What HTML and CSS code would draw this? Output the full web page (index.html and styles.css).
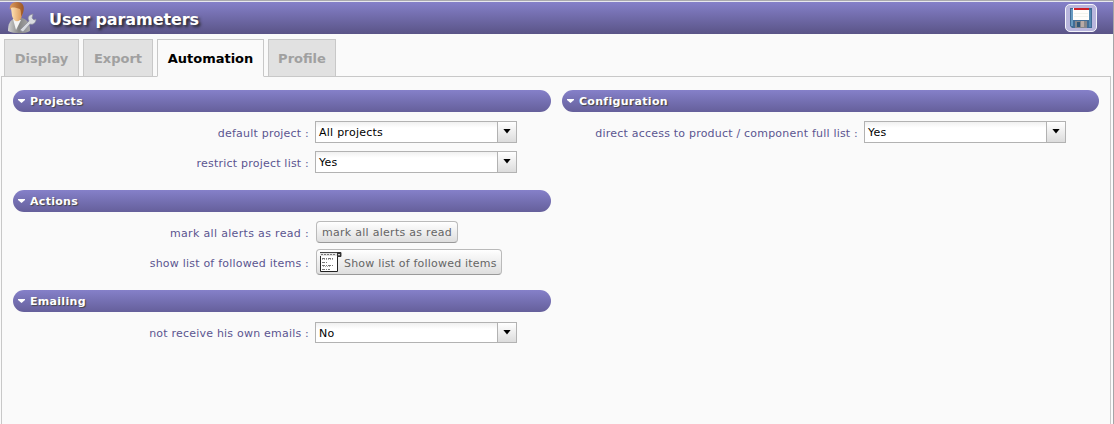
FILE: index.html
```html
<!DOCTYPE html>
<html lang="en">
<head>
<meta charset="utf-8">
<title>User parameters</title>
<link rel="stylesheet" href="styles.css">
</head>
<body>
<div class="window">
  <header class="titlebar">
    <svg class="user-icon" width="30" height="32" viewBox="0 0 30 32">
      <defs>
        <linearGradient id="skin" x2="1"><stop stop-color="#ffe2b4"/><stop offset="1" stop-color="#d99251"/></linearGradient>
        <linearGradient id="suit" x2="1"><stop stop-color="#d2d2d2"/><stop offset=".5" stop-color="#858585"/><stop offset="1" stop-color="#a9a9a9"/></linearGradient>
        <linearGradient id="hair" x2="1"><stop stop-color="#dc9a5c"/><stop offset="1" stop-color="#9c5522"/></linearGradient>
      </defs>
      <path d="M0 29c0-7 2-11 7-13h7c6 2 8 5 8 13-5 3-16 3-22 0z" fill="url(#suit)"/>
      <path d="M5 17l3 11 5-10z" fill="#f4f4f4"/>
      <path d="M3 6c0-5 11-5 12 0l-1 8c-2 7-8 7-10 0z" fill="url(#skin)"/>
      <path d="M2 8c-1-5 2-8 7-8 6 0 8 4 6 11l-2 4c0-4 0-6-1-8-3-1-7-2-9-1z" fill="url(#hair)"/>
      <path d="M12 28l9-9c-2-4 0-6 4-7l-1 4 2 2 2-1c0 4-3 6-6 5L15 30z" fill="#d9dbe0" stroke="#8b8c9b" stroke-width=".7"/>
    </svg>
    <h1 class="title">User parameters</h1>
    <button class="save" aria-label="Save">
      <svg width="22" height="20" viewBox="0 0 22 20">
        <path d="M0 0h22v20H2l-2-2z" fill="#416c96"/>
        <path d="M1 1h2v17H1z" fill="#689bc1"/>
        <path d="M19 2h2v17h-2z" fill="#558ab2"/>
        <path d="M3 0h16v12H3z" fill="#fffefb"/>
        <path d="M4 0h15v2H4z" fill="#cd2028"/>
        <path d="M4 5.500h14M4 8.500h14" stroke="#f0f3ec"/>
        <path d="M5 13h12v7H5z" fill="#85868c"/>
        <path d="M7 14h3v5H7z" fill="#2f5677"/>
        <path d="M11 13h3v6h-3z" fill="#b9aaa5"/>
      </svg>
    </button>
  </header>
  <nav class="tabs">
    <span class="tab tab-display">Display</span>
    <span class="tab tab-export">Export</span>
    <span class="tab tab-automation active">Automation</span>
    <span class="tab tab-profile">Profile</span>
  </nav>
  <main class="panel">
    <div class="column">
      <section class="group">
        <h2 class="bar"><i class="caret"></i>Projects</h2>
        <div class="row"><label>default project :</label><div class="select"><span>All projects</span><i class="drop"></i></div></div>
        <div class="row"><label>restrict project list :</label><div class="select"><span>Yes</span><i class="drop"></i></div></div>
      </section>
      <section class="group">
        <h2 class="bar"><i class="caret"></i>Actions</h2>
        <div class="row"><label class="wide">mark all alerts as read :</label><button class="button mark">mark all alerts as read</button></div>
        <div class="row"><label>show list of followed items :</label><button class="button show">
          <svg width="23" height="21" viewBox="0 0 23 21">
            <path d="M1.500 1h17v18.500h-17z" fill="#fff" stroke="#222"/>
            <path d="M1 1h17v3H1z" fill="#e2e2e2"/>
            <path d="M2 2.500h14" stroke="#777" stroke-dasharray="2 1"/>
            <path d="M1 .5h21v4h-4" stroke="#444" fill="none"/>
            <path d="M18 0h4v5h-4z" fill="#333"/><path d="M19 2h2l-1 2z" fill="#fff"/>
            <path d="M3 6.500h11M3 10.500h6M3 13.500h11M3 17.500h8" stroke="#777" stroke-dasharray="3 1 1 1"/>
            <path d="M3 7.500h12M4 14.500h7" stroke="#aaa" stroke-dasharray="1 1"/>
          </svg><span>Show list of followed items</span></button></div>
      </section>
      <section class="group">
        <h2 class="bar"><i class="caret"></i>Emailing</h2>
        <div class="row"><label>not receive his own emails :</label><div class="select short"><span>No</span><i class="drop"></i></div></div>
      </section>
    </div>
    <div class="column">
      <section class="group">
        <h2 class="bar"><i class="caret"></i>Configuration</h2>
        <div class="row"><label>direct access to product / component full list :</label><div class="select"><span>Yes</span><i class="drop"></i></div></div>
      </section>
    </div>
  </main>
</div>
</body>
</html>
```
FILE: styles.css
```css
* { box-sizing: border-box; }
body { margin: 0; background: #fafafa; font: 11px/14px Verdana, "DejaVu Sans", sans-serif; overflow: hidden; }
.window { height: 424px; border-top: 1px solid #a9a9ad; border-right: 1px solid #a5a5a8; display: flex; flex-direction: column; }
.titlebar { height: 33px; flex: none; display: flex; align-items: center; border-top: 1px solid #e8e8ee; background: linear-gradient(#8580c9, #5a5487); padding: 0 16px 0 8px; }
.user-icon { flex: none; }
.title { margin: 4px 0 0 11px; flex: 1; color: #fff; font-size: 16px; line-height: 20px; letter-spacing: -.08px; text-shadow: 2px 2px 3px #222; }
.save { width: 32px; height: 28px; padding: 0 0 1px; border: 1px solid #f5f5fb; border-radius: 5px; background: #b9b6dd; display: flex; align-items: center; justify-content: center; }
.tabs { height: 42px; flex: none; display: flex; gap: 4px; padding: 5px 0 0 4px; }
.tab { height: 38px; border: 1px solid #c8c8c8; background: #e1e1e1; color: #a0a0a0; font-size: 13px; line-height: 37px; font-weight: bold; text-align: center; white-space: nowrap; position: relative; }
.tab-display { width: 75px; }
.tab-export { width: 70px; }
.tab-automation { width: 107px; }
.tab-profile { width: 68px; }
.tab.active { background: #fafafa; color: #000; border-bottom-color: #fafafa; z-index: 1; }
.panel { margin: 0 2px 0 1px; flex: 1; border: 1px solid #c8c8c8; border-bottom: 0; padding: 13px 11px; display: grid; grid-template-columns: 538px 537px; column-gap: 11px; }
.group { height: 100px; display: flex; flex-direction: column; }
.bar { margin: 0 0 5px; height: 22px; flex: none; display: flex; align-items: center; gap: 5px; padding-left: 5px; border-radius: 11px; background: linear-gradient(#8580c9, #655f9b); color: #fff; font-size: 11px; line-height: 22px; padding-top: 1px; letter-spacing: .3px; text-shadow: 1px 1px 1px #444; }
.caret { width: 7px; height: 4px; margin-top: -1px; background: #fff; clip-path: polygon(0 0, 100% 0, 100% 25%, 50% 100%, 0 25%); }
.row { height: 30px; flex: none; display: flex; align-items: center; }
.row label { width: 296px; padding-top: 3px; margin-right: 6px; color: #5b5590; letter-spacing: .21px; text-align: right; white-space: nowrap; }
.row label.wide { letter-spacing: .33px; }
.select { width: 202px; height: 22px; margin-top: -1px; border: 1px solid #b2b2b2; background: linear-gradient(#f0f0f0, #fff 6px); display: flex; color: #000; }
.select span { flex: 1; padding-left: 3px; line-height: 21px; letter-spacing: .25px; }
.select.short { height: 21px; margin-top: 0; }
.drop { width: 19px; border-left: 1px solid #b2b2b2; background: linear-gradient(#fff, #dcdcdc); display: flex; padding: 7px 0 0 5px; }
.drop::before { content: ""; width: 8px; height: 5px; background: #000; clip-path: polygon(0 0, 100% 0, 50% 100%); }
.button { height: 22px; margin: 0 0 0 1px; padding: 0; border: 1px solid #bababa; border-bottom-color: #999; border-radius: 4px; background: linear-gradient(#fff, #dedede); color: #656565; font: inherit; letter-spacing: .28px; display: flex; align-items: center; justify-content: center; white-space: nowrap; }
.mark { width: 142px; padding-top: 3px; margin-top: -1px; }
.show { width: 186px; height: 26px; gap: 2px; justify-content: flex-start; padding-left: 2px; }
.show svg { flex: none; }
.show span { padding-top: 4px; letter-spacing: .2px; }
```
